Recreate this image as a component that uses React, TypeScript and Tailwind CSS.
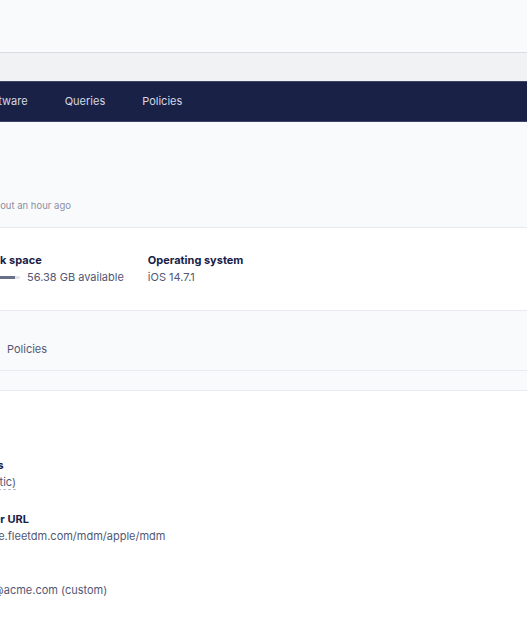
import React from "react";

const fields = [
  { label: "MDM status", value: "On (automatic)", tip: true },
  { label: "MDM server URL", value: "https://acme.fleetdm.com/mdm/apple/mdm" },
  { label: "Used by", value: "anna.chao@acme.com (custom)" },
];

export default function App() {
  return (
    <div className="h-[628px] w-[527px] overflow-hidden bg-white font-['Inter','Liberation_Sans',sans-serif] text-[11px]">
      <div className="h-[53px] border-b border-[#d9dbe1] bg-[#f9fafc]" />
      <div className="h-[28px] bg-[#f1f2f4]" />
      <nav className="flex h-[41px] items-center border-y border-[#3c4468] bg-[#192147] text-[#d6d8e1]">
        <span className="-ml-[19px]">Software</span>
        <span className="ml-[37px]">Queries</span>
        <span className="ml-[37px]">Policies</span>
      </nav>

      <div className="flex h-[106px] items-end border-b border-[#e8eaef] bg-[#f9fafc] pb-[14px]">
        <span className="-ml-[11px] text-[9.5px] text-[#8b8fa2]">about an hour ago</span>
      </div>

      <section className="flex h-[83px] items-start gap-[24px] border-b border-[#e8eaef] bg-white pt-[24px]">
        <div className="-ml-[17px] flex flex-col">
          <span className="font-bold leading-[17px] text-[#192147]">Disk space</span>
          <div className="flex items-center gap-[7px] leading-[17px] text-[#515774]">
            <div className="flex h-[3px] w-[37px] overflow-hidden rounded-full bg-[#e2e4ea]">
              <div className="h-full w-[32px] bg-[#6b7089]" />
            </div>
            <span>56.38 GB available</span>
          </div>
        </div>
        <div className="flex flex-col">
          <span className="font-bold leading-[17px] text-[#192147]">Operating system</span>
          <span className="leading-[17px] text-[#515774]">iOS 14.7.1</span>
        </div>
      </section>

      <div className="flex h-[60px] items-center border-b border-[#e8eaef] bg-[#f9fafc] pt-[18px]">
        <span className="ml-[7px] text-[#515774]">Policies</span>
      </div>
      <div className="h-[20px] border-b border-[#e8eaef] bg-[#f9fafc]" />

      <div className="flex flex-col gap-[20px] bg-white pt-[66px]">
        {fields.map((f) => (
          <div key={f.label} className="-ml-[61px] flex flex-col leading-[17px]">
            <span className="font-bold text-[#192147]">{f.label}</span>
            <span className="text-[#515774]">
              {f.tip ? (
                <span className="border-b border-dashed border-[#b8bbc8]">{f.value}</span>
              ) : (
                f.value
              )}
            </span>
          </div>
        ))}
      </div>
    </div>
  );
}
